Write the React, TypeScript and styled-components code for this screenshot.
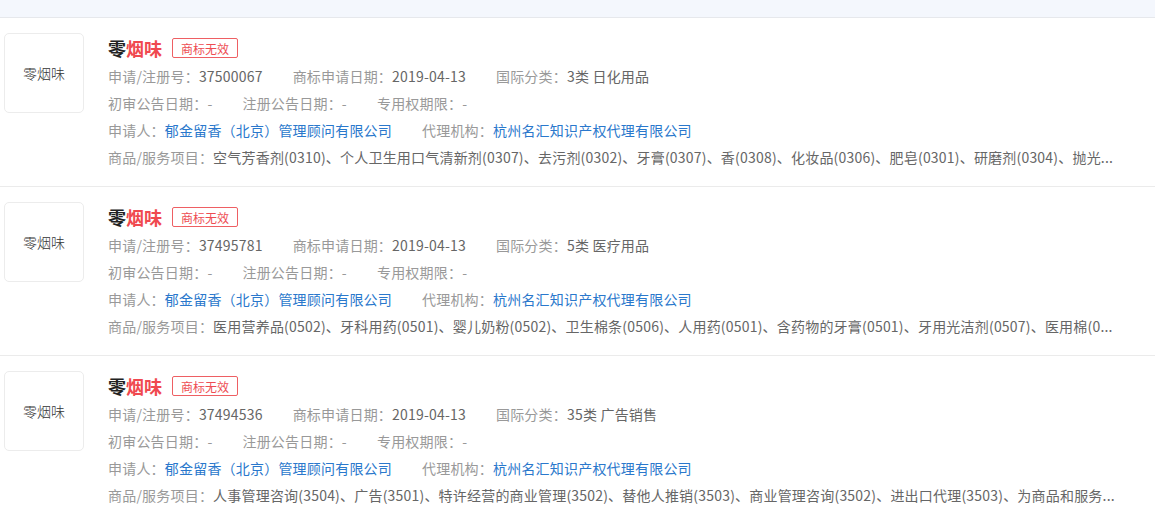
import React from "react";
import styled, { createGlobalStyle } from "styled-components";

const GlobalStyle = createGlobalStyle`
	html, body {
		margin: 0;
		padding: 0;
		background: #fff;
		font-family: "Microsoft YaHei", "Noto Sans CJK SC", sans-serif;
		text-spacing-trim: space-all;
	}
`;

const Page = styled.div`
	width: 1155px;
	overflow: hidden;
`;

const TopBar = styled.div`
	height: 17px;
	background-color: #f4f7fd;
	border-bottom: 1px solid #e6e8ec;
`;

const List = styled.ul`
	list-style: none;
	padding: 0;
	margin: 0;
`;

const Row = styled.li`
	display: flex;
	align-items: flex-start;
	gap: 24px;
	padding: 15px 20px 15px 4px;
	border-bottom: 1px solid #ebebeb;
`;

const Logo = styled.div`
	flex: 0 0 auto;
	width: 78px;
	height: 78px;
	border: 1px solid #ececec;
	border-radius: 5px;
	display: flex;
	align-items: center;
	justify-content: center;
	font-family: "Noto Sans CJK SC", serif;
	font-weight: 300;
	font-size: 14px;
	color: #333;
`;

const Info = styled.div`
	flex: 1;
	min-width: 0;
`;

const TitleRow = styled.div`
	display: flex;
	align-items: center;
	gap: 10px;
	height: 30px;
`;

const Title = styled.span`
	font-size: 18px;
	font-weight: bold;
	color: #222;
`;

const Hit = styled.em`
	font-style: normal;
	color: #f0484f;
`;

const Badge = styled.span`
	display: inline-flex;
	align-items: center;
	height: 18px;
	padding: 0 8px;
	border: 1px solid #ee5f63;
	border-radius: 2px;
	font-size: 12px;
	color: #ee4c52;
`;

const Line = styled.div`
	height: 27px;
	line-height: 27px;
	font-size: 14px;
	letter-spacing: 0.2px;
	color: #999;
	white-space: nowrap;
`;

const Field = styled.span`
	margin-right: 30px;
`;

const Value = styled.span<{ $link?: boolean }>`
	color: ${(p) => (p.$link ? "#2a78cc" : "#666")};
`;

type Mark = {
	regNo: string;
	date: string;
	cls: string;
	goods: string;
};

const marks: Mark[] = [
	{
		regNo: "37500067",
		date: "2019-04-13",
		cls: "3类 日化用品",
		goods:
			"空气芳香剂(0310)、个人卫生用口气清新剂(0307)、去污剂(0302)、牙膏(0307)、香(0308)、化妆品(0306)、肥皂(0301)、研磨剂(0304)、抛光...",
	},
	{
		regNo: "37495781",
		date: "2019-04-13",
		cls: "5类 医疗用品",
		goods:
			"医用营养品(0502)、牙科用药(0501)、婴儿奶粉(0502)、卫生棉条(0506)、人用药(0501)、含药物的牙膏(0501)、牙用光洁剂(0507)、医用棉(0...",
	},
	{
		regNo: "37494536",
		date: "2019-04-13",
		cls: "35类 广告销售",
		goods:
			"人事管理咨询(3504)、广告(3501)、特许经营的商业管理(3502)、替他人推销(3503)、商业管理咨询(3502)、进出口代理(3503)、为商品和服务...",
	},
];

function MarkRow({ mark }: { mark: Mark }) {
	return (
		<Row>
			<Logo>零烟味</Logo>
			<Info>
				<TitleRow>
					<Title>
						零<Hit>烟味</Hit>
					</Title>
					<Badge>商标无效</Badge>
				</TitleRow>
				<Line>
					<Field>
						申请/注册号：<Value>{mark.regNo}</Value>
					</Field>
					<Field>
						商标申请日期：<Value>{mark.date}</Value>
					</Field>
					<Field>
						国际分类：<Value>{mark.cls}</Value>
					</Field>
				</Line>
				<Line>
					<Field>初审公告日期：-</Field>
					<Field>注册公告日期：-</Field>
					<Field>专用权期限：-</Field>
				</Line>
				<Line>
					<Field>
						申请人：<Value $link>郁金留香（北京）管理顾问有限公司</Value>
					</Field>
					<Field>
						代理机构：<Value $link>杭州名汇知识产权代理有限公司</Value>
					</Field>
				</Line>
				<Line>
					商品/服务项目：<Value>{mark.goods}</Value>
				</Line>
			</Info>
		</Row>
	);
}

export default function App() {
	return (
		<Page>
			<GlobalStyle />
			<TopBar />
			<List>
				{marks.map((m) => (
					<MarkRow key={m.regNo} mark={m} />
				))}
			</List>
		</Page>
	);
}
